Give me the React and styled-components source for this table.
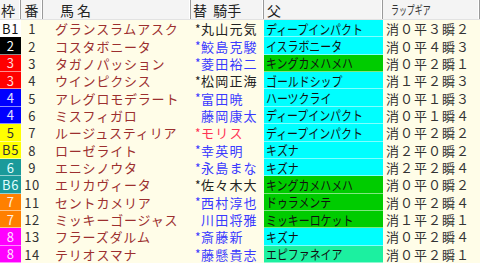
import React from "react";
import styled, { createGlobalStyle } from "styled-components";

const Global = createGlobalStyle`
  html, body { margin: 0; padding: 0; background: #fffde8; }
  body { font-family: "Noto Sans CJK JP", "Noto Sans", sans-serif; }
`;

const COLS = "21px 22px 148px 73px 119px 97px";

const Table = styled.div`
  width: 480px;
  height: 263px;
  display: flex;
  flex-direction: column;
  overflow: hidden;
  background: #fffde8;
  font-family: "Noto Sans CJK JP", sans-serif;
  font-size: 13px;
  line-height: 1;
`;

const HeaderRow = styled.div`
  display: grid;
  grid-template-columns: ${COLS};
  height: 20px;
  flex: none;
  background: #f4f4f4;
  border-bottom: 1px solid #e2e2e2;
  box-sizing: border-box;
`;

const HeadCell = styled.div`
  display: flex;
  align-items: center;
  justify-content: ${(p) => p.$align || "flex-start"};
  padding-left: ${(p) => p.$pad || 0}px;
  border-right: 1px solid #9a9a9a;
  box-shadow: inset -1px 0 0 #ffffff;
  color: #222;
  font-size: 14px;
  letter-spacing: ${(p) => p.$ls || 0}px;
  white-space: nowrap;
  box-sizing: border-box;
  overflow: hidden;
`;

const SmallHead = styled.span`
  display: inline-block;
  font-size: 12px;
  transform: scaleX(0.66);
  transform-origin: left center;
  color: #333;
`;

const Row = styled.div`
  display: grid;
  grid-template-columns: ${COLS};
  flex: 1 1 0;
  min-height: 0;
`;

const WakuCell = styled.div`
  display: flex;
  align-items: center;
  justify-content: center;
  background: ${(p) => p.$bg};
  color: ${(p) => p.$fg};
  border-bottom: 1px solid rgba(255, 255, 255, 0.55);
  box-sizing: border-box;
  font-size: 13px;
  letter-spacing: 0.5px;
`;

const NumCell = styled.div`
  display: flex;
  align-items: center;
  justify-content: center;
  color: #333;
  font-size: 13px;
  letter-spacing: 0.5px;
`;

const NameCell = styled.div`
  display: flex;
  align-items: center;
  padding-left: 12px;
  color: #9c2f2f;
  font-size: 13px;
  letter-spacing: 0.8px;
  white-space: nowrap;
  overflow: hidden;
`;

const JockeyCell = styled.div`
  display: flex;
  align-items: center;
  padding-left: 4px;
  color: ${(p) => p.$fg};
  font-size: 13px;
  letter-spacing: 1.2px;
  white-space: nowrap;
  overflow: hidden;
`;

const Star = styled.span`
  display: inline-block;
  width: 6px;
  font-size: 12px;
  letter-spacing: 0;
`;

const SireCell = styled.div`
  display: flex;
  align-items: center;
  padding-left: 2px;
  background: ${(p) => p.$bg};
  border-bottom: 1px solid rgba(255, 255, 255, 0.5);
  box-sizing: border-box;
  color: #111;
  white-space: nowrap;
  overflow: hidden;
`;

const Narrow = styled.span`
  display: inline-block;
  font-size: 13px;
  transform: scaleX(0.84);
  transform-origin: left center;
`;

const LapCell = styled.div`
  display: flex;
  align-items: center;
  padding-left: 3px;
  color: #333;
  font-size: 13px;
  letter-spacing: 1px;
  white-space: nowrap;
`;

const WAKU = {
  1: ["#ffffff", "#111"],
  2: ["#000000", "#ffffff"],
  3: ["#ff0000", "#ffd8d8"],
  4: ["#0000ff", "#e0e0ff"],
  5: ["#ffff00", "#333"],
  6: ["#1a9a9a", "#e0ffff"],
  7: ["#ff8000", "#fff0e0"],
  8: ["#ff00ff", "#ffe0ff"],
};

const SIRE = {
  c: "#00ffff",
  g: "#00cc00",
  s: "#1cf0a0",
};

const JC = { k: "#222", b: "#3a3aff", r: "#ff3355" };

const rows = [
  ["B1", 1, 1, "グランスラムアスク", true, "丸山元気", "k", "ディープインパクト", "c", "消０平３瞬２"],
  ["2", 2, 2, "コスタボニータ", true, "鮫島克駿", "b", "イスラボニータ", "c", "消０平４瞬３"],
  ["3", 3, 3, "タガノパッション", true, "菱田裕二", "b", "キングカメハメハ", "g", "消０平２瞬１"],
  ["3", 3, 4, "ウインピクシス", true, "松岡正海", "k", "ゴールドシップ", "c", "消１平２瞬３"],
  ["4", 4, 5, "アレグロモデラート", true, "富田暁", "b", "ハーツクライ", "c", "消０平１瞬３"],
  ["4", 4, 6, "ミスフィガロ", false, "藤岡康太", "b", "ディープインパクト", "c", "消０平１瞬４"],
  ["5", 5, 7, "ルージュスティリア", true, "モリス", "r", "ディープインパクト", "c", "消０平２瞬２"],
  ["B5", 5, 8, "ローゼライト", true, "幸英明", "b", "キズナ", "c", "消２平０瞬２"],
  ["6", 6, 9, "エニシノウタ", true, "永島まな", "b", "キズナ", "c", "消２平２瞬４"],
  ["B6", 6, 10, "エリカヴィータ", true, "佐々木大", "k", "キングカメハメハ", "g", "消０平０瞬２"],
  ["7", 7, 11, "セントカメリア", true, "西村淳也", "b", "ドゥラメンテ", "g", "消０平２瞬４"],
  ["7", 7, 12, "ミッキーゴージャス", false, "川田将雅", "b", "ミッキーロケット", "g", "消１平２瞬１"],
  ["8", 8, 13, "フラーズダルム", true, "斎藤新", "b", "キズナ", "c", "消０平２瞬４"],
  ["8", 8, 14, "テリオスマナ", true, "藤懸貴志", "b", "エピファネイア", "s", "消０平２瞬１"],
];

export default function App() {
  return (
    <>
      <Global />
      <Table>
        <HeaderRow>
          <HeadCell $align="flex-start" $pad={1}>枠</HeadCell>
          <HeadCell $align="center">番</HeadCell>
          <HeadCell $pad={17} $ls={3}>馬名</HeadCell>
          <HeadCell $pad={2}>替&nbsp;&nbsp;騎手</HeadCell>
          <HeadCell $pad={3}>父</HeadCell>
          <HeadCell $pad={8}>
            <SmallHead>ラップギア</SmallHead>
          </HeadCell>
        </HeaderRow>
        {rows.map(([wl, w, num, name, star, jockey, jc, sire, sc, lap]) => (
          <Row key={num}>
            <WakuCell $bg={WAKU[w][0]} $fg={WAKU[w][1]}>{wl}</WakuCell>
            <NumCell>{num}</NumCell>
            <NameCell>{name}</NameCell>
            <JockeyCell $fg={JC[jc]}>
              <Star>{star ? "*" : ""}</Star>
              {jockey}
            </JockeyCell>
            <SireCell $bg={SIRE[sc]}>
              <Narrow>{sire}</Narrow>
            </SireCell>
            <LapCell>{lap}</LapCell>
          </Row>
        ))}
      </Table>
    </>
  );
}
